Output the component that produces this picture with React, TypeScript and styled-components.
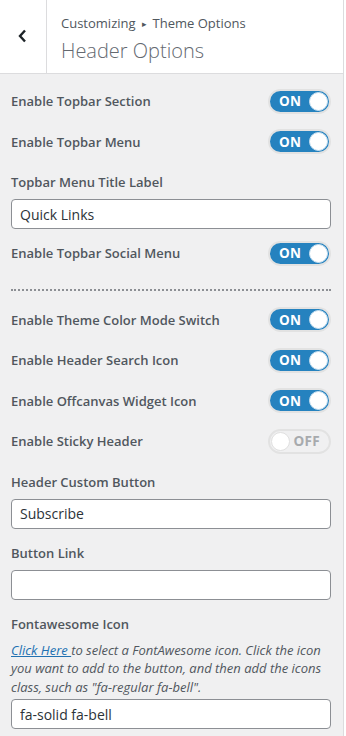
import React from "react";
import styled, { createGlobalStyle } from "styled-components";

const GlobalStyle = createGlobalStyle`
  html, body {
    margin: 0;
    padding: 0;
    background: #fff;
  }
  body {
    font-family: "Open Sans", "Noto Sans", sans-serif;
    font-size: 13px;
    color: #50575e;
  }
`;

const Page = styled.div`
  display: flex;
  width: 346px;
  height: 736px;
  overflow: hidden;
`;

const Sidebar = styled.div`
  width: 343px;
  flex-shrink: 0;
  background: #f0f0f1;
  border-right: 1px solid #dcdcde;
  display: flex;
  flex-direction: column;
`;

const Preview = styled.div`
  flex: 1;
  background: #fff;
`;

const Header = styled.div`
  display: flex;
  flex-shrink: 0;
  height: 73px;
  background: #fff;
  border-bottom: 1px solid #dcdcde;
`;

const BackButton = styled.button`
  width: 47px;
  height: 100%;
  border: 0;
  border-right: 1px solid #dcdcde;
  background: #fff;
  display: flex;
  align-items: center;
  justify-content: center;
  padding: 0 0 1px 0;
  cursor: pointer;
`;

const Titles = styled.div`
  display: flex;
  flex-direction: column;
  justify-content: center;
  padding: 3px 0 0 14px;
`;

const Breadcrumb = styled.span`
  font-size: 13px;
  line-height: 20px;
  color: #50575e;
`;

const Arrow = styled.span`
  font-size: 9px;
  margin: 0 6px;
  vertical-align: 1px;
`;

const PanelTitle = styled.h2`
  margin: 4px 0 0;
  font-size: 20px;
  font-weight: 300;
  line-height: 26px;
  color: #646970;
`;

const Controls = styled.div`
  display: flex;
  flex-direction: column;
  flex-shrink: 0;
  padding: 15px 12px 0 11px;
`;

const ToggleRow = styled.div`
  display: flex;
  align-items: center;
  justify-content: space-between;
  height: 24px;
  margin-bottom: 16.5px;
`;

const Label = styled.span<{ $block?: boolean }>`
  font-weight: 600;
  font-size: 13px;
  line-height: 20px;
  color: #50575e;
  display: block;
  margin-bottom: ${(p) => (p.$block ? "7px" : "0")};
`;

const Field = styled.div`
  display: flex;
  flex-direction: column;
  padding-top: 2px;
  margin-bottom: 12px;
`;

const Input = styled.input`
  box-sizing: border-box;
  width: 100%;
  height: 30px;
  border: 1px solid #8c8f94;
  border-radius: 4px;
  background: #fff;
  padding: 0 8px;
  font-family: "Open Sans", "Noto Sans", sans-serif;
  font-size: 14px;
  color: #2c3338;
  outline: none;
`;

const Divider = styled.hr`
  border: 0;
  border-top: 2px dotted #8c8f94;
  margin: 7px 0 17px;
  height: 0;
`;

const Description = styled.p`
  margin: 0 0 3px;
  font-style: italic;
  font-size: 13px;
  line-height: 18.5px;
  color: #50575e;
`;

const Link = styled.a`
  color: #2271b1;
  text-decoration: underline;
`;

const Track = styled.span<{ $on: boolean }>`
  box-sizing: border-box;
  display: flex;
  align-items: center;
  justify-content: space-between;
  width: 63px;
  height: 25px;
  border-radius: 13px;
  border: 2px solid #e2e2e2;
  background: ${(p) => (p.$on ? "#2582bf" : "#f0f0f1")};
  flex-direction: ${(p) => (p.$on ? "row" : "row-reverse")};
  padding: ${(p) => (p.$on ? "0 1px 0 9px" : "0 9px 0 1px")};
`;

const ToggleText = styled.span<{ $on: boolean }>`
  font-family: "Open Sans", "Noto Sans", sans-serif;
  font-weight: 700;
  font-size: 13.5px;
  letter-spacing: 0.3px;
  color: ${(p) => (p.$on ? "#fff" : "#a7aaad")};
`;

const Knob = styled.span<{ $on: boolean }>`
  box-sizing: border-box;
  width: 19px;
  height: 19px;
  border-radius: 50%;
  background: #fff;
  border: 1px solid ${(p) => (p.$on ? "#c7dff0" : "#e0e0e0")};
`;

const Toggle = ({ on }: { on: boolean }) => (
  <Track $on={on}>
    <ToggleText $on={on}>{on ? "ON" : "OFF"}</ToggleText>
    <Knob $on={on} />
  </Track>
);

const ToggleControl = ({ label, on = true }: { label: string; on?: boolean }) => (
  <ToggleRow>
    <Label>{label}</Label>
    <Toggle on={on} />
  </ToggleRow>
);

const TextControl = ({
  label,
  value,
  children,
}: {
  label: string;
  value: string;
  children?: React.ReactNode;
}) => (
  <Field>
    <Label $block>{label}</Label>
    {children}
    <Input defaultValue={value} />
  </Field>
);

export default function App() {
  return (
    <>
      <GlobalStyle />
      <Page>
        <Sidebar>
          <Header>
            <BackButton aria-label="Back">
              <svg width="12" height="14" viewBox="0 0 12 14">
                <polyline
                  points="8,1.5 3,7 8,12.5"
                  fill="none"
                  stroke="#1d2327"
                  strokeWidth="2.4"
                />
              </svg>
            </BackButton>
            <Titles>
              <Breadcrumb>
                Customizing<Arrow>▸</Arrow>Theme Options
              </Breadcrumb>
              <PanelTitle>Header Options</PanelTitle>
            </Titles>
          </Header>
          <Controls>
            <ToggleControl label="Enable Topbar Section" />
            <ToggleControl label="Enable Topbar Menu" />
            <TextControl label="Topbar Menu Title Label" value="Quick Links" />
            <ToggleControl label="Enable Topbar Social Menu" />
            <Divider />
            <ToggleControl label="Enable Theme Color Mode Switch" />
            <ToggleControl label="Enable Header Search Icon" />
            <ToggleControl label="Enable Offcanvas Widget Icon" />
            <ToggleControl label="Enable Sticky Header" on={false} />
            <TextControl label="Header Custom Button" value="Subscribe" />
            <TextControl label="Button Link" value="" />
            <TextControl label="Fontawesome Icon" value="fa-solid fa-bell">
              <Description>
                <Link href="#">Click Here </Link>to select a FontAwesome icon.
                Click the icon you want to add to the button, and then add the
                icons class, such as "fa-regular fa-bell".
              </Description>
            </TextControl>
          </Controls>
        </Sidebar>
        <Preview />
      </Page>
    </>
  );
}
